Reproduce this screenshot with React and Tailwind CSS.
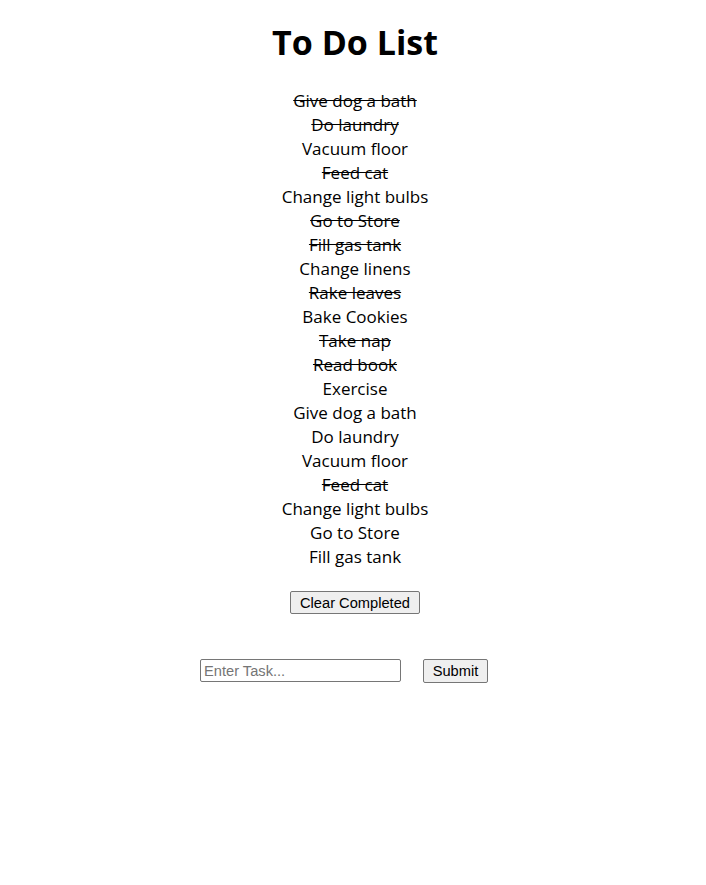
import { useState } from "react";

const initialTasks = [
  { text: "Give dog a bath", done: true },
  { text: "Do laundry", done: true },
  { text: "Vacuum floor", done: false },
  { text: "Feed cat", done: true },
  { text: "Change light bulbs", done: false },
  { text: "Go to Store", done: true },
  { text: "Fill gas tank", done: true },
  { text: "Change linens", done: false },
  { text: "Rake leaves", done: true },
  { text: "Bake Cookies", done: false },
  { text: "Take nap", done: true },
  { text: "Read book", done: true },
  { text: "Exercise", done: false },
  { text: "Give dog a bath", done: false },
  { text: "Do laundry", done: false },
  { text: "Vacuum floor", done: false },
  { text: "Feed cat", done: true },
  { text: "Change light bulbs", done: false },
  { text: "Go to Store", done: false },
  { text: "Fill gas tank", done: false },
];

export default function App() {
  const [tasks, setTasks] = useState(initialTasks);
  const [value, setValue] = useState("");

  function toggle(i) {
    setTasks(tasks.map((t, idx) => (idx === i ? { ...t, done: !t.done } : t)));
  }

  function clearCompleted() {
    setTasks(tasks.filter((t) => !t.done));
  }

  function submit(e) {
    e.preventDefault();
    if (!value.trim()) return;
    setTasks([...tasks, { text: value, done: false }]);
    setValue("");
  }

  return (
    <div className="min-h-[885px] bg-white pl-[4px] text-center text-black font-['Open_Sans',sans-serif]">
      <h1 className="pt-[18px] text-[34px] leading-[48px] font-bold">To Do List</h1>

      {/* list */}
      <ul className="mt-[23px]">
        {tasks.map((t, i) => (
          <li
            key={i}
            onClick={() => toggle(i)}
            className={
              "text-[17px] leading-[24px] cursor-pointer " +
              (t.done ? "line-through" : "")
            }
          >
            {t.text}
          </li>
        ))}
      </ul>

      <div className="mt-[22px] flex justify-center">
        <button
          onClick={clearCompleted}
          className="h-[23px] px-[9px] border border-[#767676] rounded-[2px] bg-[#efefef] text-[14.67px] leading-[18px] font-['Liberation_Sans',sans-serif]"
        >
          Clear Completed
        </button>
      </div>

      <form onSubmit={submit} className="mt-[45px] flex justify-center gap-[22px] pr-[22px]">
        <input
          value={value}
          onChange={(e) => setValue(e.target.value)}
          placeholder="Enter Task..."
          className="w-[201px] h-[23px] px-[3px] border border-[#767676] rounded-[2px] text-[14.67px] font-['Liberation_Sans',sans-serif] placeholder:text-[#757575] outline-none"
        />
        <button
          type="submit"
          className="w-[65px] h-[24px] border border-[#767676] rounded-[2px] bg-[#efefef] text-[14.67px] leading-[18px] font-['Liberation_Sans',sans-serif]"
        >
          Submit
        </button>
      </form>
    </div>
  );
}
